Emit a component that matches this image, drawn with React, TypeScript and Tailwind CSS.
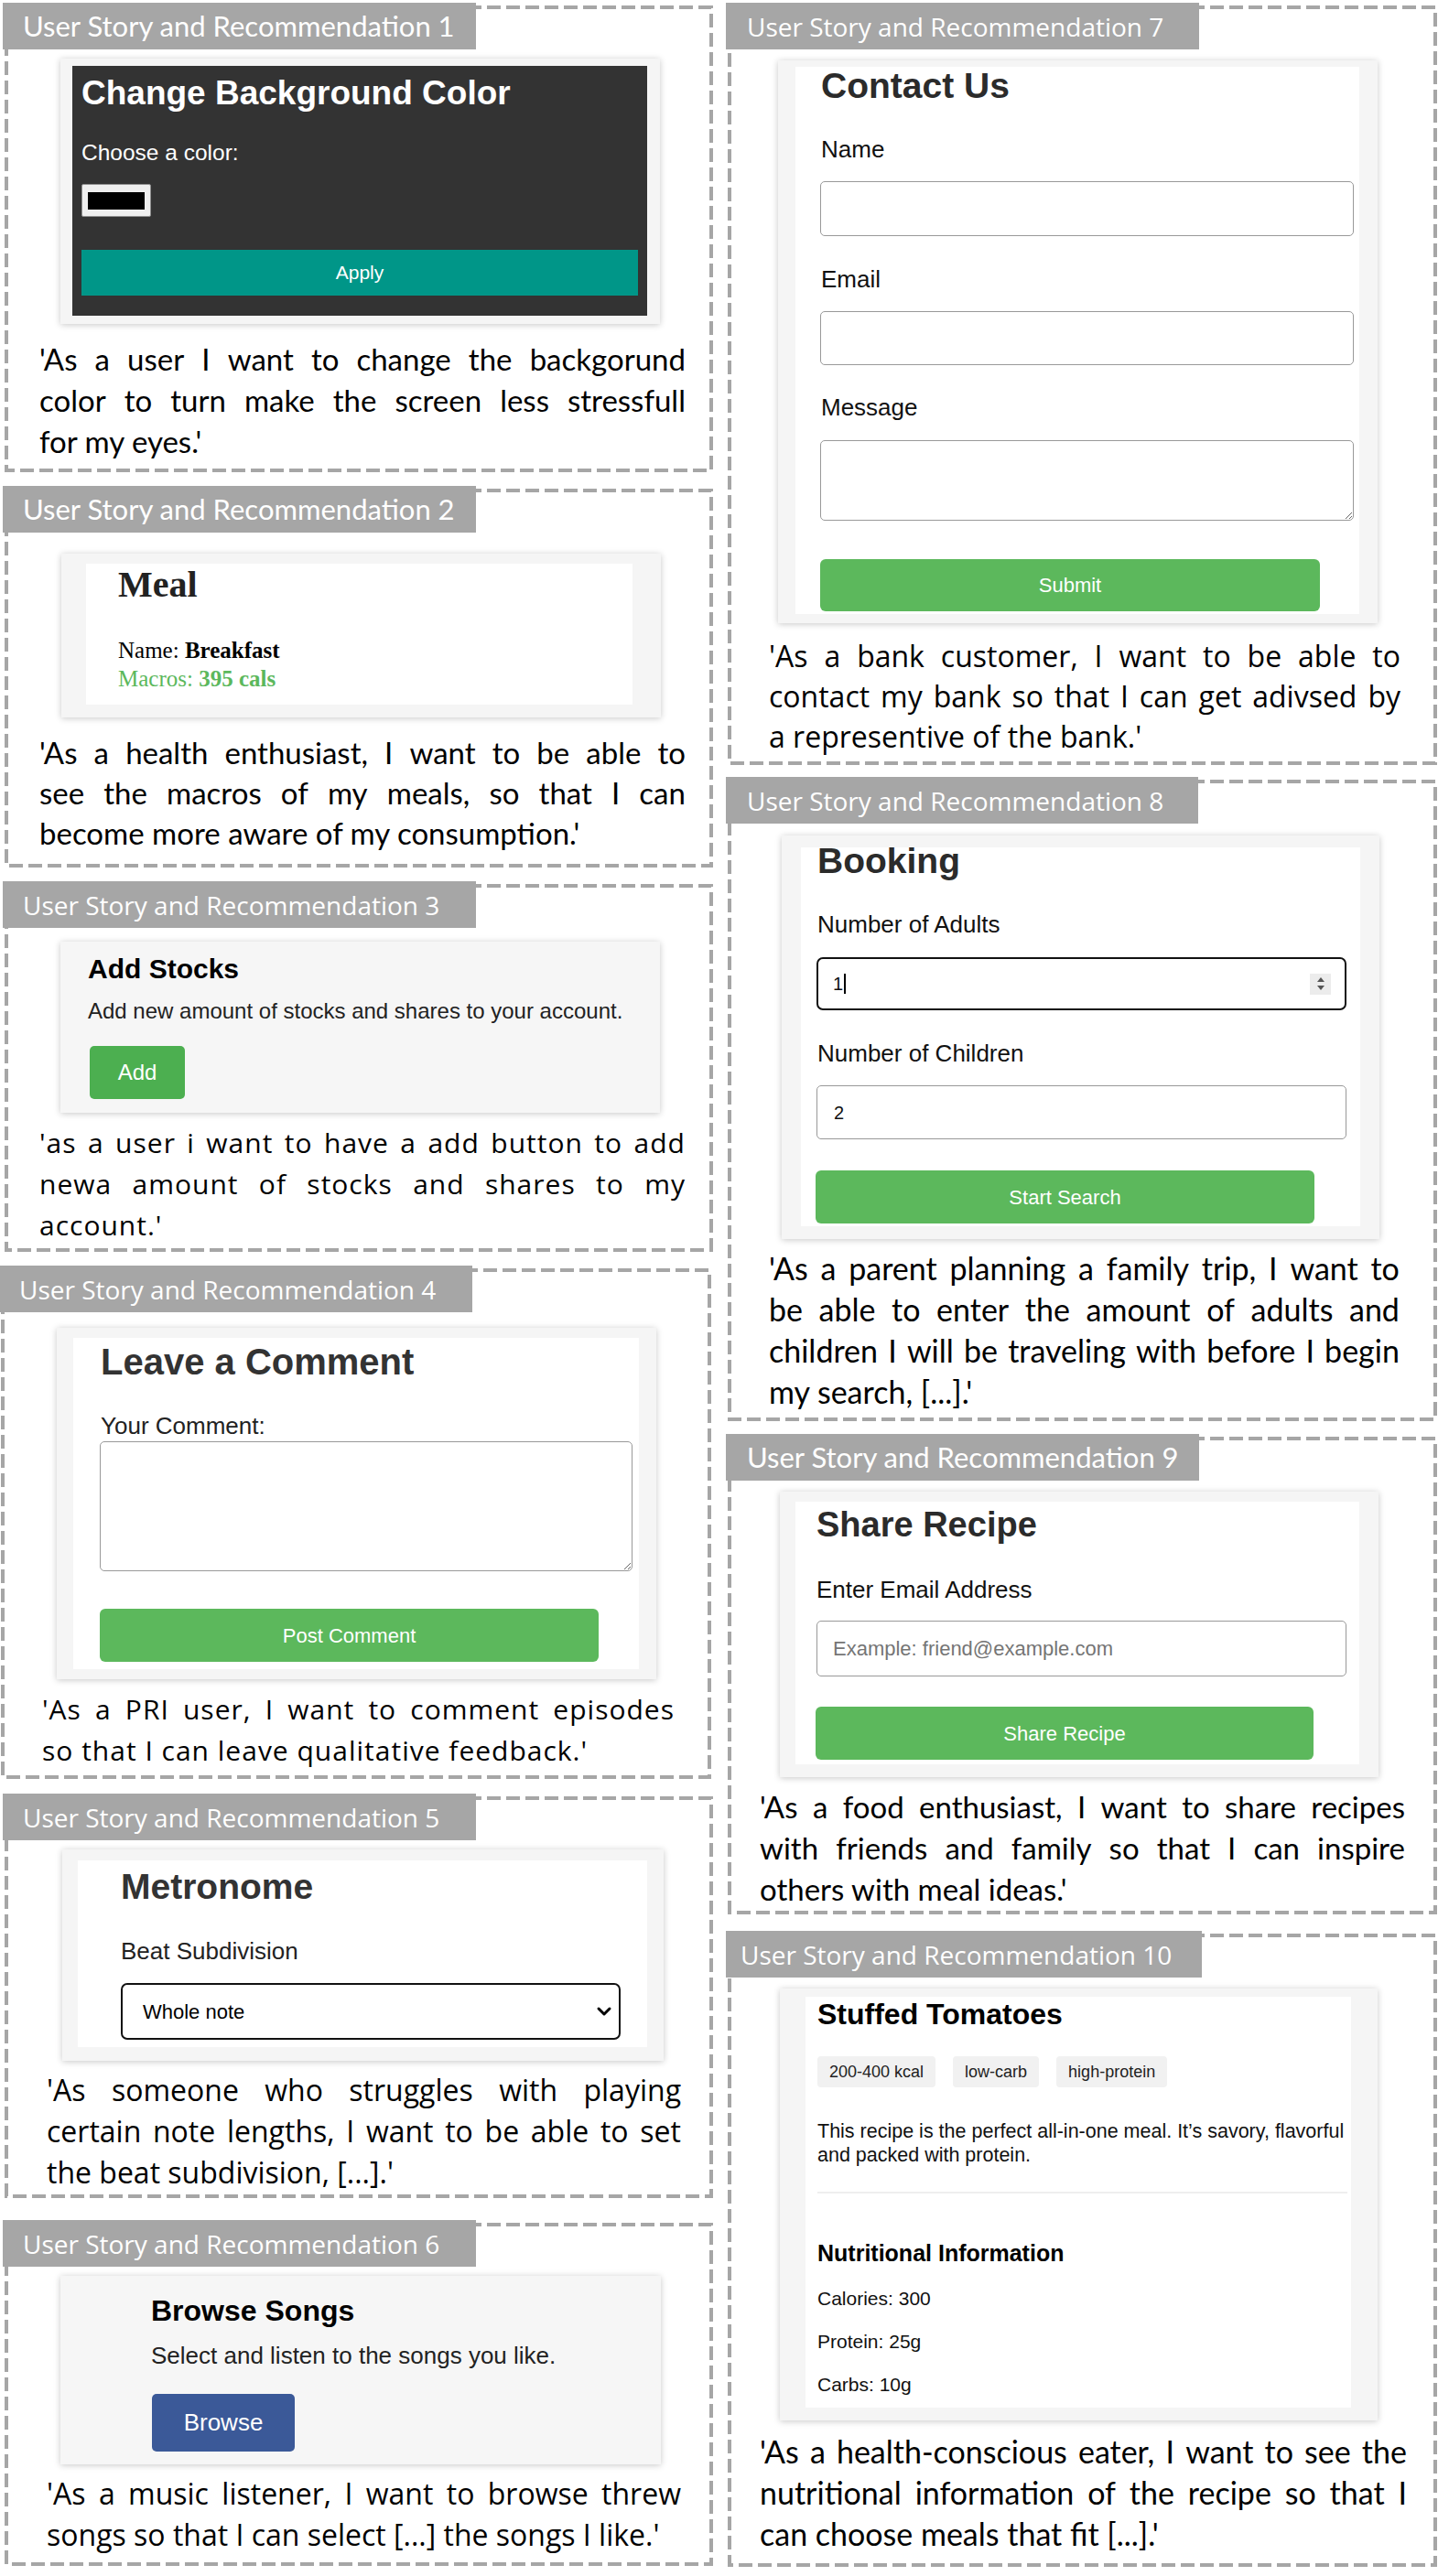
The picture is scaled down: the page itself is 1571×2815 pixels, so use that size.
import { ChevronDown } from 'lucide-react';
import type { ReactNode } from 'react';

const sans = "font-['Liberation_Sans',Arial,sans-serif]";
const cardShadow = 'shadow-[0_1px_7px_rgba(0,0,0,0.22)]';

function Panel({
  label,
  labelClass,
  boxClass,
  children,
}: {
  label: string;
  labelClass: string;
  boxClass: string;
  children: ReactNode;
}) {
  return (
    <section className={`relative flex shrink-0 flex-col ${boxClass}`}>
      {/* dashed frame */}
      <svg className="pointer-events-none absolute left-[2px] top-[2px] h-[calc(100%-4px)] w-[calc(100%-4px)] overflow-visible">
        <rect
          width="100%"
          height="100%"
          fill="none"
          stroke="#a6a6a6"
          strokeWidth="4"
          strokeDasharray="15 6"
        />
      </svg>
      <div
        className={`relative -ml-[2px] -mt-[3px] flex h-[51px] items-center bg-[#a6a6a6] text-white ${labelClass}`}
      >
        {label}
      </div>
      {children}
    </section>
  );
}

function Caption({ lines, className }: { lines: string[]; className: string }) {
  return (
    <div className={`text-black ${className}`}>
      {lines.map((line, i) =>
        i < lines.length - 1 ? (
          <div key={i} className="flex justify-between">
            {line.split(' ').map((w, j) => (
              <span key={j}>{w}</span>
            ))}
          </div>
        ) : (
          <div key={i} className="whitespace-nowrap">
            {line}
          </div>
        ),
      )}
    </div>
  );
}

function GreenButton({ className, children }: { className: string; children: ReactNode }) {
  return (
    <div
      className={`flex items-center justify-center rounded-[6px] bg-[#5cb85c] text-[22px] text-white ${className}`}
    >
      {children}
    </div>
  );
}

function Spinner() {
  return (
    <div className="flex h-[23px] w-[23px] items-center justify-center bg-[#ececec]">
      <svg width="10" height="16" viewBox="0 0 10 16">
        <path d="M5 1 L9 6 H1 Z" fill="#555" />
        <path d="M5 15 L9 10 H1 Z" fill="#555" />
      </svg>
    </div>
  );
}

export default function App() {
  return (
    <div className="flex h-[2815px] w-[1571px] overflow-hidden bg-white">
      {/* left column */}
      <div className="ml-[5px] flex w-[774px] flex-col">
        <Panel
          label="User Story and Recommendation 1"
          labelClass="w-[517px] pl-[22px] font-['Lato',sans-serif] text-[31px]"
          boxClass="mt-[6px] h-[510px]"
        >
          <div
            className={`ml-[61px] mt-[10px] w-[655px] bg-[#f5f5f5] pb-[9px] pl-[13px] pr-[14px] pt-[8px] ${cardShadow}`}
          >
            <div className={`bg-[#333333] px-[10px] pb-[22px] pt-[12px] text-white ${sans}`}>
              <h2 className="text-[37px] font-bold leading-[36px]">Change Background Color</h2>
              <p className="mt-[33px] text-[24.5px] leading-[28px]">Choose a color:</p>
              <div className="mt-[20px] flex h-[36px] w-[76px] items-center justify-center rounded-[2px] border border-[#8f8f8f] bg-[#efefef]">
                <div className="h-[19px] w-[62px] bg-black" />
              </div>
              <div className="mt-[36px] flex h-[50px] items-center justify-center bg-[#009688] text-[21px]">
                Apply
              </div>
            </div>
          </div>
          <Caption
            className="ml-[38px] mt-[16px] w-[706px] font-['Lato',sans-serif] text-[33px] leading-[45px]"
            lines={[
              "'As a user I want to change the backgorund",
              'color to turn make the screen less stressfull',
              "for my eyes.'",
            ]}
          />
        </Panel>

        <Panel
          label="User Story and Recommendation 2"
          labelClass="w-[517px] pl-[22px] font-['Lato',sans-serif] text-[31px]"
          boxClass="mt-[18px] h-[414px]"
        >
          <div
            className={`ml-[62px] mt-[23px] w-[655px] bg-[#f5f5f5] pb-[14px] pl-[27px] pr-[31px] pt-[11px] ${cardShadow}`}
          >
            <div className="bg-white pb-[13px] pl-[35px] pt-[1px] font-['Liberation_Serif','Times_New_Roman',serif]">
              <h2 className="text-[40px] font-bold leading-[44px] text-[#222]">Meal</h2>
              <p className="mt-[34px] text-[25px] leading-[31px] text-black">
                Name: <b>Breakfast</b>
              </p>
              <p className="text-[25px] leading-[31px] text-[#5cb85c]">
                Macros: <b>395 cals</b>
              </p>
            </div>
          </div>
          <Caption
            className="ml-[38px] mt-[16px] w-[706px] font-['Lato',sans-serif] text-[33px] leading-[44px]"
            lines={[
              "'As a health enthusiast, I want to be able to",
              'see the macros of my meals, so that I can',
              "become more aware of my consumption.'",
            ]}
          />
        </Panel>

        <Panel
          label="User Story and Recommendation 3"
          labelClass="w-[517px] pl-[22px] font-['Open_Sans',sans-serif] text-[28px]"
          boxClass="mt-[18px] h-[402px]"
        >
          <div
            className={`ml-[61px] mt-[15px] w-[655px] bg-[#f6f6f6] pb-[15px] pl-[30px] pt-[13px] ${cardShadow} ${sans}`}
          >
            <h2 className="text-[30px] font-bold leading-[34px] text-black">Add Stocks</h2>
            <p className="mt-[15px] text-[24px] leading-[28px] text-[#222]">
              Add new amount of stocks and shares to your account.
            </p>
            <div className="ml-[2px] mt-[24px] flex h-[58px] w-[104px] items-center justify-center rounded-[5px] bg-[#4caf50] text-[24px] text-white">
              Add
            </div>
          </div>
          <Caption
            className="ml-[38px] mt-[10px] w-[706px] font-['Open_Sans',sans-serif] text-[30px] leading-[45px] tracking-[1px]"
            lines={[
              "'as a user i want to have a add button to add",
              'newa amount of stocks and shares to my',
              "account.'",
            ]}
          />
        </Panel>

        <Panel
          label="User Story and Recommendation 4"
          labelClass="w-[517px] pl-[22px] font-['Open_Sans',sans-serif] text-[28px]"
          boxClass="-ml-[4px] mt-[18px] h-[558px] w-[776px]"
        >
          <div
            className={`ml-[61px] mt-[17px] w-[655px] bg-[#f5f5f5] pb-[11px] pl-[18px] pr-[19px] pt-[11px] ${cardShadow}`}
          >
            <div className={`bg-white pb-[8px] pl-[30px] pt-[4px] ${sans}`}>
              <h2 className="text-[40px] font-bold leading-[44px] text-[#333]">Leave a Comment</h2>
              <p className="mt-[33px] text-[26px] leading-[30px] text-[#222]">Your Comment:</p>
              <textarea
                readOnly
                className="-ml-[1px] mt-[2px] block h-[142px] w-[582px] rounded-[5px] border border-[#999] bg-white"
              />
              <GreenButton className="-ml-[1px] mt-[41px] h-[58px] w-[545px]">Post Comment</GreenButton>
            </div>
          </div>
          <Caption
            className="ml-[45px] mt-[10px] w-[691px] font-['Open_Sans',sans-serif] text-[30px] leading-[45px] tracking-[1px]"
            lines={["'As a PRI user, I want to comment episodes", "so that I can leave qualitative feedback.'"]}
          />
        </Panel>

        <Panel
          label="User Story and Recommendation 5"
          labelClass="w-[517px] pl-[22px] font-['Open_Sans',sans-serif] text-[28px]"
          boxClass="mt-[19px] h-[439px]"
        >
          <div
            className={`ml-[63px] mt-[10px] w-[657px] bg-[#f5f5f5] pb-[15px] pl-[17px] pr-[18px] pt-[12px] ${cardShadow}`}
          >
            <div className={`bg-white pb-[8px] pl-[47px] pt-[8px] ${sans}`}>
              <h2 className="text-[39px] font-bold leading-[42px] text-[#333]">Metronome</h2>
              <p className="mt-[34px] text-[26px] leading-[30px] text-[#222]">Beat Subdivision</p>
              <div className="mt-[20px] flex h-[62px] w-[546px] items-center justify-between rounded-[7px] border-[2.5px] border-[#111] pl-[22px] pr-[4px] text-[22px] text-black">
                <span>Whole note</span>
                <ChevronDown size={24} strokeWidth={3} />
              </div>
            </div>
          </div>
          <Caption
            className="ml-[46px] mt-[9px] w-[693px] font-['Open_Sans',sans-serif] text-[32px] leading-[45px]"
            lines={[
              "'As someone who struggles with playing",
              'certain note lengths, I want to be able to set',
              "the beat subdivision, [...].'",
            ]}
          />
        </Panel>

        <Panel
          label="User Story and Recommendation 6"
          labelClass="w-[517px] pl-[22px] font-['Open_Sans',sans-serif] text-[28px]"
          boxClass="mt-[27px] h-[375px]"
        >
          <div
            className={`ml-[61px] mt-[10px] w-[656px] bg-[#f6f6f6] pb-[14px] pl-[99px] pt-[20px] ${cardShadow} ${sans}`}
          >
            <h2 className="text-[32px] font-bold leading-[36px] text-black">Browse Songs</h2>
            <p className="mt-[16px] text-[26px] leading-[30px] text-[#222]">
              Select and listen to the songs you like.
            </p>
            <div className="ml-[1px] mt-[27px] flex h-[63px] w-[156px] items-center justify-center rounded-[5px] bg-[#3b5998] text-[26px] text-white">
              Browse
            </div>
          </div>
          <Caption
            className="ml-[46px] mt-[9px] w-[693px] font-['Open_Sans',sans-serif] text-[32px] leading-[45px]"
            lines={[
              "'As a music listener, I want to browse threw",
              "songs so that I can select [...] the songs I like.'",
            ]}
          />
        </Panel>
      </div>

      {/* right column */}
      <div className="ml-[16px] flex w-[775px] flex-col">
        <Panel
          label="User Story and Recommendation 7"
          labelClass="w-[517px] pl-[23px] font-['Open_Sans',sans-serif] text-[28px]"
          boxClass="mt-[6px] h-[830px]"
        >
          <div
            className={`ml-[55px] mt-[12px] w-[655px] bg-[#f5f5f5] pb-[10px] pl-[19px] pr-[20px] pt-[7px] ${cardShadow}`}
          >
            <div className={`bg-white pb-[3px] pl-[28px] pt-[1px] text-[#111] ${sans}`}>
              <h2 className="text-[39px] font-bold leading-[40px] text-[#2b2b2b]">Contact Us</h2>
              <p className="mt-[34px] text-[26px] leading-[30px]">Name</p>
              <div className="-ml-[1px] mt-[20px] h-[60px] w-[583px] rounded-[5px] border border-[#999]" />
              <p className="mt-[32px] text-[26px] leading-[30px]">Email</p>
              <div className="-ml-[1px] mt-[20px] h-[59px] w-[583px] rounded-[5px] border border-[#999]" />
              <p className="mt-[31px] text-[26px] leading-[30px]">Message</p>
              <textarea
                readOnly
                className="-ml-[1px] mt-[21px] block h-[88px] w-[583px] rounded-[5px] border border-[#999] bg-white"
              />
              <GreenButton className="-ml-[1px] mt-[42px] h-[57px] w-[546px]">Submit</GreenButton>
            </div>
          </div>
          <Caption
            className="ml-[45px] mt-[14px] w-[690px] font-['Open_Sans',sans-serif] text-[32px] leading-[44px]"
            lines={[
              "'As a bank customer, I want to be able to",
              'contact my bank so that I can get adivsed by',
              "a representive of the bank.'",
            ]}
          />
        </Panel>

        <Panel
          label="User Story and Recommendation 8"
          labelClass="w-[516px] pl-[23px] font-['Open_Sans',sans-serif] text-[28px]"
          boxClass="mt-[16px] h-[701px]"
        >
          <div
            className={`ml-[59px] mt-[13px] w-[653px] bg-[#f5f5f5] pb-[14px] pl-[21px] pr-[21px] pt-[13px] ${cardShadow}`}
          >
            <div className={`bg-white pb-[3px] pl-[18px] text-[#111] ${sans}`}>
              <h2 className="text-[39px] font-bold leading-[30px] text-[#2b2b2b]">Booking</h2>
              <p className="mt-[39px] text-[26px] leading-[30px]">Number of Adults</p>
              <div className="-ml-[1px] mt-[21px] flex h-[58px] w-[579px] items-center justify-between rounded-[7px] border-[2.5px] border-[#111] pl-[16px] pr-[15px] text-[20px]">
                <span className="flex items-center">
                  1<span className="ml-[1px] inline-block h-[22px] w-[1.5px] bg-black" />
                </span>
                <Spinner />
              </div>
              <p className="mt-[32px] text-[26px] leading-[30px]">Number of Children</p>
              <div className="-ml-[1px] mt-[20px] flex h-[59px] w-[579px] items-center rounded-[5px] border border-[#999] pl-[18px] text-[20px]">
                2
              </div>
              <GreenButton className="-ml-[2px] mt-[34px] h-[58px] w-[545px]">Start Search</GreenButton>
            </div>
          </div>
          <Caption
            className="ml-[45px] mt-[9px] w-[689px] font-['Lato',sans-serif] text-[34px] leading-[45px]"
            lines={[
              "'As a parent planning a family trip, I want to",
              'be able to enter the amount of adults and',
              'children I will be traveling with before I begin',
              "my search, [...].'",
            ]}
          />
        </Panel>

        <Panel
          label="User Story and Recommendation 9"
          labelClass="w-[517px] pl-[23px] font-['Lato',sans-serif] text-[31px]"
          boxClass="mt-[17px] h-[522px]"
        >
          <div
            className={`ml-[57px] mt-[12px] w-[654px] bg-[#f5f5f5] pb-[14px] pl-[17px] pr-[21px] pt-[11px] ${cardShadow}`}
          >
            <div className={`bg-white pb-[5px] pl-[23px] pt-[5px] text-[#111] ${sans}`}>
              <h2 className="text-[38px] font-bold leading-[40px] text-[#2b2b2b]">Share Recipe</h2>
              <p className="mt-[36px] text-[26px] leading-[30px]">Enter Email Address</p>
              <div className="mt-[19px] flex h-[61px] w-[579px] items-center rounded-[5px] border border-[#999] pl-[17px] text-[22px] text-[#757575]">
                Example: friend@example.com
              </div>
              <GreenButton className="-ml-[1px] mt-[33px] h-[58px] w-[544px]">Share Recipe</GreenButton>
            </div>
          </div>
          <Caption
            className="ml-[35px] mt-[10px] w-[705px] font-['Lato',sans-serif] text-[33px] leading-[45px]"
            lines={[
              "'As a food enthusiast, I want to share recipes",
              'with friends and family so that I can inspire',
              "others with meal ideas.'",
            ]}
          />
        </Panel>

        <Panel
          label="User Story and Recommendation 10"
          labelClass="w-[520px] pl-[16px] font-['Open_Sans',sans-serif] text-[28px]"
          boxClass="mt-[21px] h-[692px]"
        >
          <div
            className={`ml-[57px] mt-[12px] w-[653px] bg-[#f5f5f5] pb-[14px] pl-[28px] pr-[29px] pt-[9px] ${cardShadow}`}
          >
            <div className={`bg-white pb-[2px] pl-[13px] pt-[1px] text-[#111] ${sans}`}>
              <h2 className="text-[32px] font-bold leading-[36px] text-black">Stuffed Tomatoes</h2>
              <div className="mt-[28px] flex gap-[19px] text-[18px] text-[#222]">
                <span className="flex h-[34px] items-center rounded-[4px] bg-[#f1f1f1] px-[13px]">200-400 kcal</span>
                <span className="flex h-[34px] items-center rounded-[4px] bg-[#f1f1f1] px-[13px]">low-carb</span>
                <span className="flex h-[34px] items-center rounded-[4px] bg-[#f1f1f1] px-[13px]">high-protein</span>
              </div>
              <p className="mt-[35px] text-[21.5px] leading-[26px]">
                This recipe is the perfect all-in-one meal. It’s savory, flavorful
                <br />
                and packed with protein.
              </p>
              <div className="mr-[4px] mt-[27px] h-[2px] bg-[#eeeeee]" />
              <h3 className="mt-[50px] text-[25px] font-bold leading-[30px] text-black">Nutritional Information</h3>
              <div className="mt-[11px] text-[21px] leading-[47px]">
                <p>Calories: 300</p>
                <p>Protein: 25g</p>
                <p>Carbs: 10g</p>
              </div>
            </div>
          </div>
          <Caption
            className="ml-[35px] mt-[11px] w-[707px] font-['Lato',sans-serif] text-[34px] leading-[45px]"
            lines={[
              "'As a health-conscious eater, I want to see the",
              'nutritional information of the recipe so that I',
              "can choose meals that fit [...].'",
            ]}
          />
        </Panel>
      </div>
    </div>
  );
}
